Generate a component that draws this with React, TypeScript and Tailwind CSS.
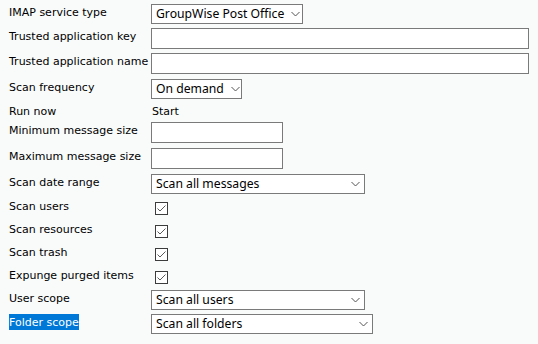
import React from "react";

const labelFont = { fontFamily: '"DejaVu Sans", Verdana, sans-serif' } as const;
const fieldFont = { fontFamily: '"Noto Sans", "Open Sans", sans-serif' } as const;

function Chevron() {
  return (
    <svg width="9" height="6" viewBox="0 0 9 6" className="shrink-0">
      <path d="M0.5 1 L4.5 5 L8.5 1" fill="none" stroke="#555" strokeWidth="1" />
    </svg>
  );
}

function Select({ text, w, tight }: { text: string; w: string; tight?: boolean }) {
  return (
    <div
      className={`${w} h-[20px] border border-[#7a7a7a] bg-white flex items-center pl-[4px] ${
        tight ? "pr-[2px] gap-[7px]" : "pr-[4px] justify-between"
      }`}
    >
      <span className="text-[12.2px] leading-[16px] text-black whitespace-nowrap" style={fieldFont}>
        {text}
      </span>
      <Chevron />
    </div>
  );
}

function Input({ w }: { w: string }) {
  return <div className={`${w} h-[21px] border border-[#7a7a7a] bg-white`} />;
}

function Check() {
  return (
    <div className="ml-[4px] mt-[4px] w-[13px] h-[13px] border border-[#3c3c3c] bg-white flex items-center justify-center">
      <svg width="11" height="11" viewBox="0 0 11 11">
        <path d="M1.5 5.5 L4 8 L9.5 2.5" fill="none" stroke="#5a5a5a" strokeWidth="1" />
      </svg>
    </div>
  );
}

function Row({
  label,
  h,
  children,
  selected,
}: {
  label: string;
  h: string;
  children: React.ReactNode;
  selected?: boolean;
}) {
  return (
    <div className={`flex items-start ${h}`}>
      <div className="w-[142px] shrink-0 flex items-start">
        <span
          className={`text-[11px] leading-[14px] pt-[2px] whitespace-nowrap ${
            selected ? "bg-[#0078d7] text-white" : "text-black"
          }`}
          style={labelFont}
        >
          {label}
        </span>
      </div>
      {children}
    </div>
  );
}

export default function App() {
  return (
    <div className="w-[538px] h-[344px] bg-[#f9fbfb] pt-[4px] pl-[9px] overflow-hidden">
      <Row label="IMAP service type" h="h-[24px]">
        <Select text="GroupWise Post Office" w="w-[152px]" tight />
      </Row>
      <Row label="Trusted application key" h="h-[25px]">
        <Input w="w-[378px]" />
      </Row>
      <Row label="Trusted application name" h="h-[26px]">
        <Input w="w-[378px]" />
      </Row>
      <Row label="Scan frequency" h="h-[24px]">
        <Select text="On demand" w="w-[91px]" tight />
      </Row>
      <Row label="Run now" h="h-[19px]">
        <span className="text-[11px] leading-[14px] pt-[2px] text-black ml-[1px]" style={labelFont}>
          Start
        </span>
      </Row>
      <Row label="Minimum message size" h="h-[26px]">
        <Input w="w-[132px]" />
      </Row>
      <Row label="Maximum message size" h="h-[26px]">
        <Input w="w-[132px]" />
      </Row>
      <Row label="Scan date range" h="h-[24px]">
        <Select text="Scan all messages" w="w-[214px]" />
      </Row>
      <Row label="Scan users" h="h-[23px]">
        <Check />
      </Row>
      <Row label="Scan resources" h="h-[23px]">
        <Check />
      </Row>
      <Row label="Scan trash" h="h-[23px]">
        <Check />
      </Row>
      <Row label="Expunge purged items" h="h-[23px]">
        <Check />
      </Row>
      <Row label="User scope" h="h-[24px]">
        <Select text="Scan all users" w="w-[214px]" />
      </Row>
      <Row label="Folder scope" h="h-[24px]" selected>
        <Select text="Scan all folders" w="w-[222px]" />
      </Row>
    </div>
  );
}
